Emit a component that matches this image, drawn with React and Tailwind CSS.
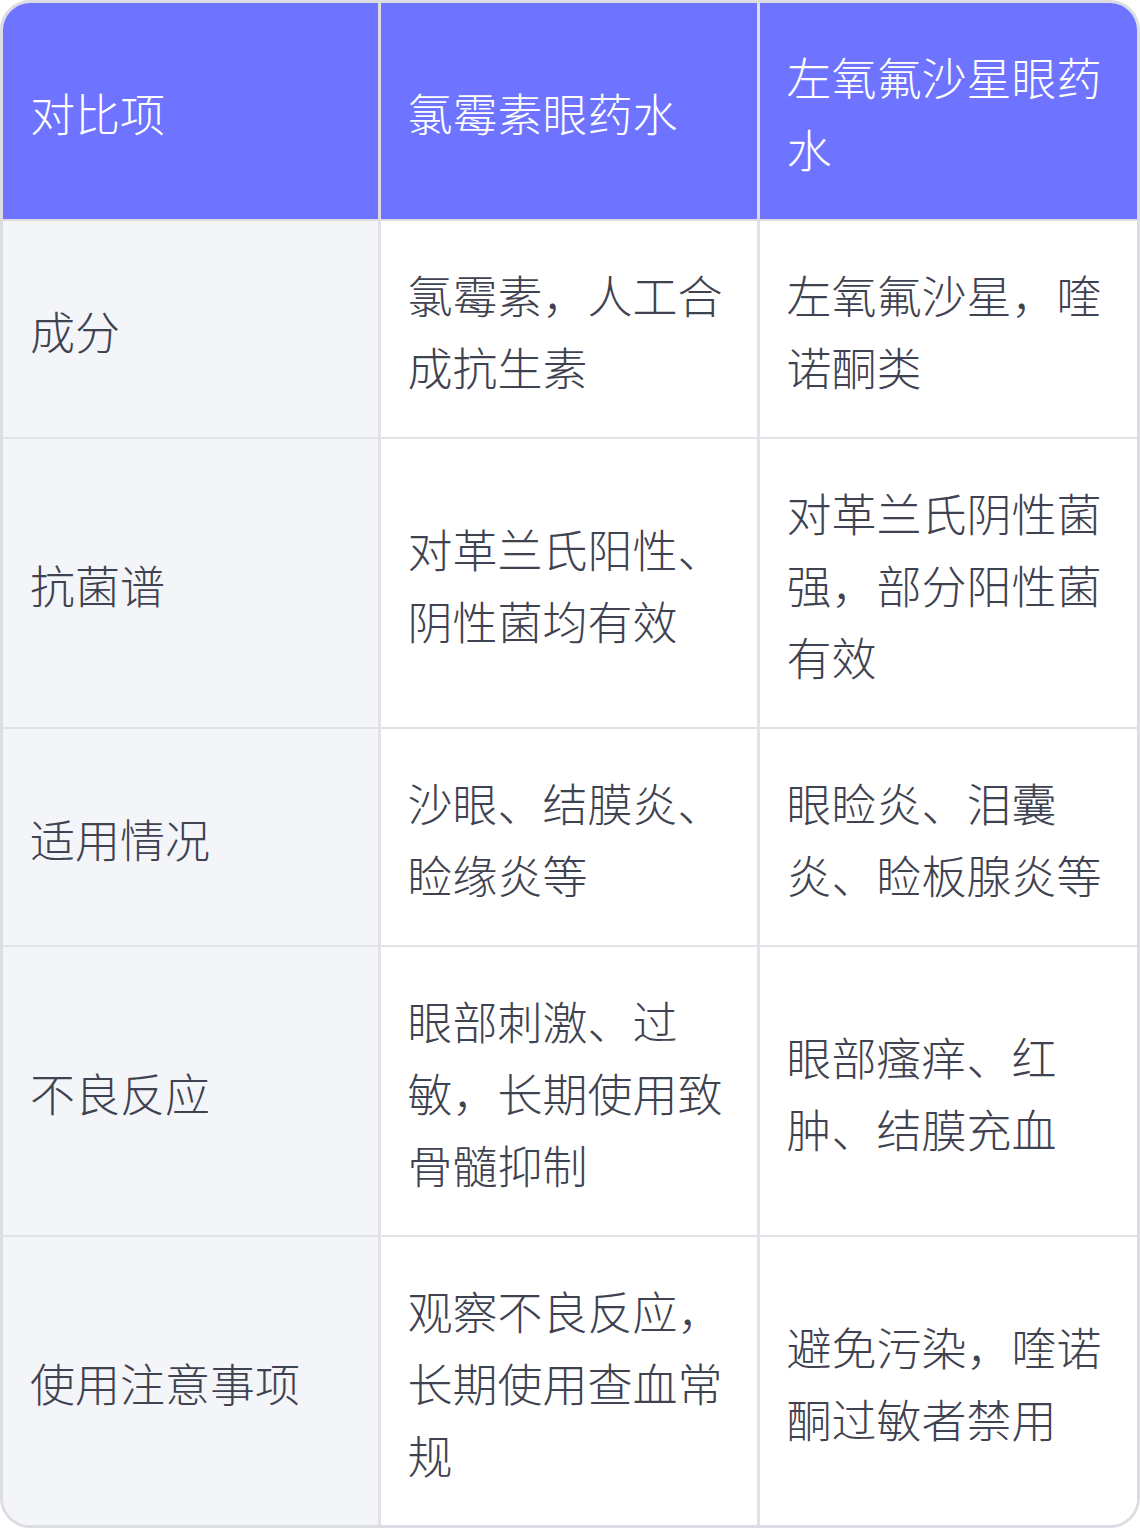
import React from "react";

const rows = [
  ["成分", "氯霉素，人工合成抗生素", "左氧氟沙星，喹诺酮类"],
  ["抗菌谱", "对革兰氏阳性、阴性菌均有效", "对革兰氏阴性菌强，部分阳性菌有效"],
  ["适用情况", "沙眼、结膜炎、睑缘炎等", "眼睑炎、泪囊炎、睑板腺炎等"],
  ["不良反应", "眼部刺激、过敏，长期使用致骨髓抑制", "眼部瘙痒、红肿、结膜充血"],
  ["使用注意事项", "观察不良反应，长期使用查血常规", "避免污染，喹诺酮过敏者禁用"],
];

export default function App() {
  return (
    <div
      className="w-[1140px] h-[1528px] bg-white"
      style={{ fontFamily: '"Noto Sans CJK SC", "Noto Sans", sans-serif' }}
    >
      <div className="overflow-hidden rounded-[30px] border-[3px] border-[#dcdde3]">
        <table className="w-full table-fixed border-collapse text-[45px] font-light leading-[72px] text-[#3f4250]">
          <colgroup>
            <col className="w-[376px]" />
            <col className="w-[379px]" />
            <col />
          </colgroup>
          <thead>
            <tr className="bg-[#6e74ff] text-white">
              {["对比项", "氯霉素眼药水", "左氧氟沙星眼药水"].map((h, i) => (
                <th
                  key={h}
                  className={`px-[27px] pt-[38px] pb-[34px] text-left align-middle font-light border-b-2 border-[#dcdde3] ${
                    i > 0 ? "border-l-[3px] border-l-[#dcdde3]" : ""
                  }`}
                >
                  {h}
                </th>
              ))}
            </tr>
          </thead>
          <tbody>
            {rows.map((r, ri) => (
              <tr
                key={r[0]}
                className={ri < rows.length - 1 ? "border-b-2 border-[#e1e2e7]" : ""}
              >
                {r.map((c, ci) => (
                  <td
                    key={ci}
                    className={`px-[27px] pt-[38px] pb-[34px] align-middle ${
                      ci === 0 ? "bg-[#f4f5f9]" : "bg-white border-l-[3px] border-l-[#e1e2e7]"
                    }`}
                  >
                    {c}
                  </td>
                ))}
              </tr>
            ))}
          </tbody>
        </table>
      </div>
    </div>
  );
}
